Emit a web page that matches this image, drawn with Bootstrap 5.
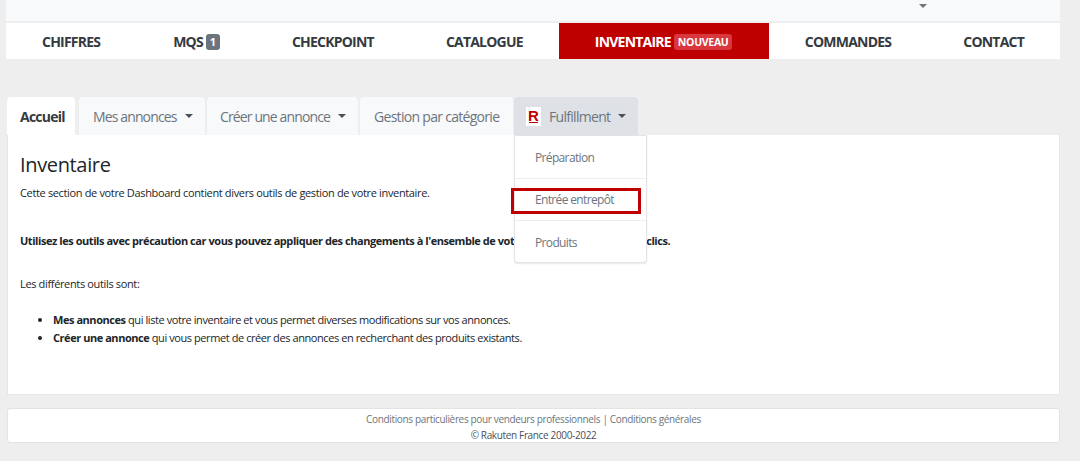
<!doctype html>
<html lang="fr"><head><meta charset="utf-8"><title>Inventaire</title>
<link rel="stylesheet" href="https://cdn.jsdelivr.net/npm/bootstrap@5.3.0/dist/css/bootstrap.min.css">
<style>
html,body{height:461px;overflow:hidden}
body{background:#eee;font-family:"Open Sans",sans-serif;font-size:11px;letter-spacing:-.35px;color:#212529;padding:0 20px 0 6px}
.topstrip{height:21px;background:#f8f9fa;display:flex;justify-content:flex-end;padding:4px 133px 0 0}
.topcaret{width:0;height:0;border:4px solid transparent;border-top:4px solid #6c757d;border-bottom:0}
.mainnav{margin-top:2px;height:36px;background:#fff;display:flex;justify-content:space-between;margin-bottom:38px}
.mainnav a{display:flex;align-items:center;gap:3px;padding:0 36px;color:#343a40;font-weight:700;font-size:14px;letter-spacing:-.78px;text-decoration:none;white-space:nowrap}
.mainnav a:first-child{padding-right:37px}
.mainnav a.now{background:#bf0000;color:#fff;width:210px;padding:0 36px}
.mainnav .mq{background:#6c757d;color:#fff;border-radius:3px;font-size:11px;line-height:16px;width:14px;text-align:center;letter-spacing:0;height:16px;margin-top:1px}
.mainnav .nw{background:#d9363e;color:#fff;border-radius:3px;font-size:10.5px;line-height:14px;padding:1px 4px;letter-spacing:-.3px;margin-top:1px}
.tabrow{display:flex;height:38px;margin-left:1px;border:0;flex-wrap:nowrap}
.tabrow .nav-link{height:38px;margin:0;padding:0 0 0 14px;display:flex;align-items:center;font-size:14px;letter-spacing:-.7px;color:#6c757d;background:#f8f9fa;border:0;border-radius:4px 4px 0 0;white-space:nowrap}
.tabrow .nav-link.active{background:#fff;color:#343a40;font-weight:700;letter-spacing:-.75px;padding-left:13px}
.tabrow .nav-link.open{background:#dee2e6;color:#6c757d}
.t1{width:68px;margin-right:4px!important}
.t2{width:126px;margin-right:2px!important}
.t3{width:151px;margin-right:2px!important}
.t4{width:153px;margin-right:1px!important}
.t5{width:124px}
.tabrow .nav-link.t2,.tabrow .nav-link.t3{letter-spacing:-.87px}
.tabrow .nav-link.t3{padding-left:13px}
.tabrow .nav-link.t5{padding-left:12px}
.caretx{display:inline-block;margin-left:8px;width:0;height:0;border:4px solid transparent;border-top:4px solid #495057;border-bottom:0}
.rlogo{width:15px;height:19px;background:#fff linear-gradient(#bf0000,#bf0000) no-repeat center 15px/9px 1px;color:#bf0000;font-family:"Liberation Sans",sans-serif;font-weight:700;font-size:15px;line-height:17px;text-align:center;margin-right:8px;letter-spacing:0}
.panel{position:relative;margin-left:1px;height:260px;background:#fff;border:1px solid #e6e6e6;border-top:0;padding:18px 12px 0}
.panel h3{font-size:20px;font-weight:500;letter-spacing:-.35px;color:#212529;margin:0 0 8px;line-height:24px}
.panel p{margin:0;line-height:16px}
.panel strong{letter-spacing:-.45px}
.gap1{margin-top:32px!important}
.gap2{margin-top:27px!important}
.infolist{margin:19px 0 0;padding-left:33px;line-height:18px;letter-spacing:-.42px}
.panel .menux{display:block;position:absolute;left:506px;top:0;min-width:0;width:133px;height:128px;margin:0;padding:0;border:1px solid #e3e3e3;border-radius:0 0 4px 4px;background:#fff;box-shadow:0 1px 2px rgba(0,0,0,.08)}
.menux .dropdown-item{height:42.5px;padding:2px 0 0 20px;display:flex;align-items:center;font-size:12px;letter-spacing:-.65px;color:#6c757d;border-bottom:1px solid #eee}
.menux li:last-child .dropdown-item{border-bottom:0}
.redbox{position:absolute;left:-4px;top:52px;width:130px;height:26px;border:3px solid #bf0000;pointer-events:none}
.foot{margin:13px 0 0 1px;height:35px;background:#fff;border:1px solid #e3e3e3;border-radius:3px;text-align:center;color:#6c757d;font-size:10px;line-height:16px;padding-top:2px;letter-spacing:-.35px}
.foot div:last-child{color:#495057}
</style></head><body>
<div class="topstrip"><span class="topcaret"></span></div>
<nav class="mainnav">
<a href="#">CHIFFRES</a>
<a href="#">MQS <span class="mq">1</span></a>
<a href="#">CHECKPOINT</a>
<a href="#">CATALOGUE</a>
<a href="#" class="now">INVENTAIRE <span class="nw">NOUVEAU</span></a>
<a href="#">COMMANDES</a>
<a href="#">CONTACT</a>
</nav>
<ul class="nav nav-tabs tabrow">
<li class="nav-item"><a class="nav-link active t1" href="#">Accueil</a></li>
<li class="nav-item"><a class="nav-link t2" href="#">Mes annonces<span class="caretx"></span></a></li>
<li class="nav-item"><a class="nav-link t3" href="#">Créer une annonce<span class="caretx"></span></a></li>
<li class="nav-item"><a class="nav-link t4" href="#">Gestion par catégorie</a></li>
<li class="nav-item"><a class="nav-link open t5" href="#"><span class="rlogo">R</span>Fulfillment<span class="caretx"></span></a></li>
</ul>
<section class="panel">
<h3>Inventaire</h3>
<p>Cette section de votre Dashboard contient divers outils de gestion de votre inventaire.</p>
<p class="gap1"><strong>Utilisez les outils avec précaution car vous pouvez appliquer des changements à l'ensemble de votre inventaire en quelques clics.</strong></p>
<p class="gap2">Les différents outils sont:</p>
<ul class="infolist">
<li><strong>Mes annonces</strong> qui liste votre inventaire et vous permet diverses modifications sur vos annonces.</li>
<li><strong>Créer une annonce</strong> qui vous permet de créer des annonces en recherchant des produits existants.</li>
</ul>
<ul class="dropdown-menu menux">
<li><a class="dropdown-item" href="#">Préparation</a></li>
<li><a class="dropdown-item" href="#">Entrée entrepôt</a></li>
<li><a class="dropdown-item" href="#">Produits</a></li>
<li class="redbox"></li>
</ul>
</section>
<footer class="foot">
<div>Conditions particulières pour vendeurs professionnels | Conditions générales</div>
<div>© Rakuten France 2000-2022</div>
</footer>
<script src="https://cdn.jsdelivr.net/npm/bootstrap@5.3.0/dist/js/bootstrap.bundle.min.js"></script>
</body></html>
